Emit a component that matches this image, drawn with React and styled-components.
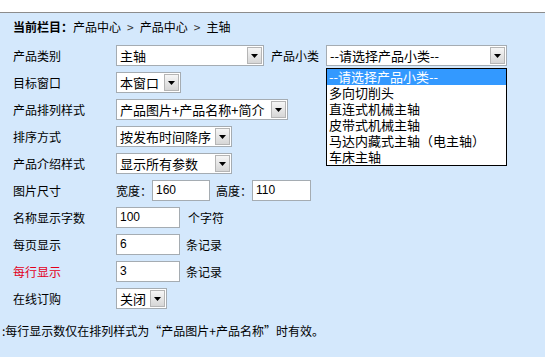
import React from "react";
import styled, { createGlobalStyle } from "styled-components";

const Global = createGlobalStyle`
  html, body { margin: 0; padding: 0; }
  body {
    background: #d4e8fc;
    font-family: "Noto Sans CJK SC", "Liberation Sans", sans-serif;
    font-size: 12px;
    color: #000;
  }
`;

const Page = styled.div`
  width: 545px;
  height: 357px;
  background: #d4e8fc;
  overflow: hidden;
`;

const TopBar = styled.div`
  height: 12px;
  background: #fff;
  border-bottom: 1px solid #8c8c8c;
`;

const Crumb = styled.div`
  margin: 4px 0 5px;
  padding-left: 13px;
  height: 20px;
  line-height: 20px;
  font-size: 12px;
  white-space: nowrap;
`;

const CrumbTitle = styled.b`
  font-weight: 700;
`;

const Sep = styled.span`
  margin: 0 6px;
  color: #333;
`;

const Form = styled.div`
  padding-left: 13px;
  display: flex;
  flex-direction: column;
`;

const Row = styled.div`
  display: flex;
  align-items: center;
  height: 27px;
  white-space: nowrap;
`;

const Label = styled.div`
  width: 103px;
  flex: none;
  font-size: 12px;
  color: ${(p) => (p.$red ? "#e3001b" : "#000")};
`;

const Field = styled.div`
  display: flex;
  align-items: center;
  gap: ${(p) => p.$gap ?? 7}px;
  position: relative;
`;

const SelectWrap = styled.div`
  position: relative;
  display: inline-flex;
`;

const SelectBox = styled.div`
  display: inline-flex;
  align-items: center;
  width: ${(p) => p.$w}px;
  height: 21px;
  box-sizing: border-box;
  border: 1px solid #a5acb2;
  background: #fff;
  font-size: 13px;
  line-height: 19px;
`;

const SelectText = styled.span`
  flex: 1;
  padding-left: 3px;
  white-space: nowrap;
`;

const ArrowBtn = styled.span`
  flex: none;
  width: 15px;
  height: 17px;
  margin-right: 1px;
  box-sizing: border-box;
  border: 1px solid #b5b5b5;
  background: linear-gradient(#f6f6f6, #d6d6d6);
  display: flex;
  align-items: center;
  justify-content: center;
`;

const ListBox = styled.div`
  position: absolute;
  left: 0;
  top: 23px;
  width: 100%;
  box-sizing: border-box;
  border: 1px solid #000;
  background: #fff;
  z-index: 2;
`;

const Option = styled.div`
  height: 16px;
  line-height: 16px;
  padding-left: 2px;
  font-size: 13px;
  background: ${(p) => (p.$active ? "#3399ff" : "#fff")};
  color: ${(p) => (p.$active ? "#fff" : "#000")};
  white-space: nowrap;
`;

const Input = styled.div`
  width: ${(p) => p.$w}px;
  height: 21px;
  box-sizing: border-box;
  border: 1px solid #a5acb2;
  background: #fff;
  padding-left: 3px;
  font-family: "Liberation Sans", Arial, sans-serif;
  font-size: 12px;
  line-height: 19px;
`;

const Unit = styled.span`
  font-size: 12px;
  margin-left: ${(p) => p.$ml ?? 0}px;
`;

const Note = styled.div`
  margin-top: 11px;
  padding-left: 2px;
  height: 16px;
  line-height: 16px;
  font-size: 12px;
  white-space: nowrap;
`;

const Arrow = () => (
  <ArrowBtn>
    <svg width="7" height="4" viewBox="0 0 7 4">
      <path d="M0 0H7L3.5 4Z" fill="#000" />
    </svg>
  </ArrowBtn>
);

const Select = ({ w, children, list }) => (
  <SelectWrap>
    <SelectBox $w={w}>
      <SelectText>{children}</SelectText>
      <Arrow />
    </SelectBox>
    {list}
  </SelectWrap>
);

const options = [
  "--请选择产品小类--",
  "多向切削头",
  "直连式机械主轴",
  "皮带式机械主轴",
  "马达内藏式主轴（电主轴）",
  "车床主轴",
];

export default function App() {
  return (
    <Page>
      <Global />
      <TopBar />
      <Crumb>
        <CrumbTitle>当前栏目：</CrumbTitle>产品中心<Sep>&gt;</Sep>产品中心<Sep>&gt;</Sep>主轴
      </Crumb>
      <Form>
        <Row>
          <Label>产品类别</Label>
          <Field $gap={7}>
            <Select w={148}>主轴</Select>
            <Unit>产品小类</Unit>
            <Select
              w={181}
              list={
                <ListBox>
                  {options.map((o, i) => (
                    <Option key={o} $active={i === 0}>
                      {o}
                    </Option>
                  ))}
                </ListBox>
              }
            >
              --请选择产品小类--
            </Select>
          </Field>
        </Row>
        <Row>
          <Label>目标窗口</Label>
          <Field>
            <Select w={65}>本窗口</Select>
          </Field>
        </Row>
        <Row>
          <Label>产品排列样式</Label>
          <Field>
            <Select w={172}>产品图片+产品名称+简介</Select>
          </Field>
        </Row>
        <Row>
          <Label>排序方式</Label>
          <Field>
            <Select w={116}>按发布时间降序</Select>
          </Field>
        </Row>
        <Row>
          <Label>产品介绍样式</Label>
          <Field>
            <Select w={116}>显示所有参数</Select>
          </Field>
        </Row>
        <Row>
          <Label>图片尺寸</Label>
          <Field $gap={0}>
            <Unit>宽度：</Unit>
            <Input $w={58}>160</Input>
            <Unit $ml={6}>高度：</Unit>
            <Input $w={59}>110</Input>
          </Field>
        </Row>
        <Row>
          <Label>名称显示字数</Label>
          <Field $gap={8}>
            <Input $w={64}>100</Input>
            <Unit>个字符</Unit>
          </Field>
        </Row>
        <Row>
          <Label>每页显示</Label>
          <Field $gap={6}>
            <Input $w={64}>6</Input>
            <Unit>条记录</Unit>
          </Field>
        </Row>
        <Row>
          <Label $red>每行显示</Label>
          <Field $gap={6}>
            <Input $w={64}>3</Input>
            <Unit>条记录</Unit>
          </Field>
        </Row>
        <Row>
          <Label>在线订购</Label>
          <Field>
            <Select w={51}>关闭</Select>
          </Field>
        </Row>
      </Form>
      <Note>:每行显示数仅在排列样式为“产品图片+产品名称”时有效。</Note>
    </Page>
  );
}
